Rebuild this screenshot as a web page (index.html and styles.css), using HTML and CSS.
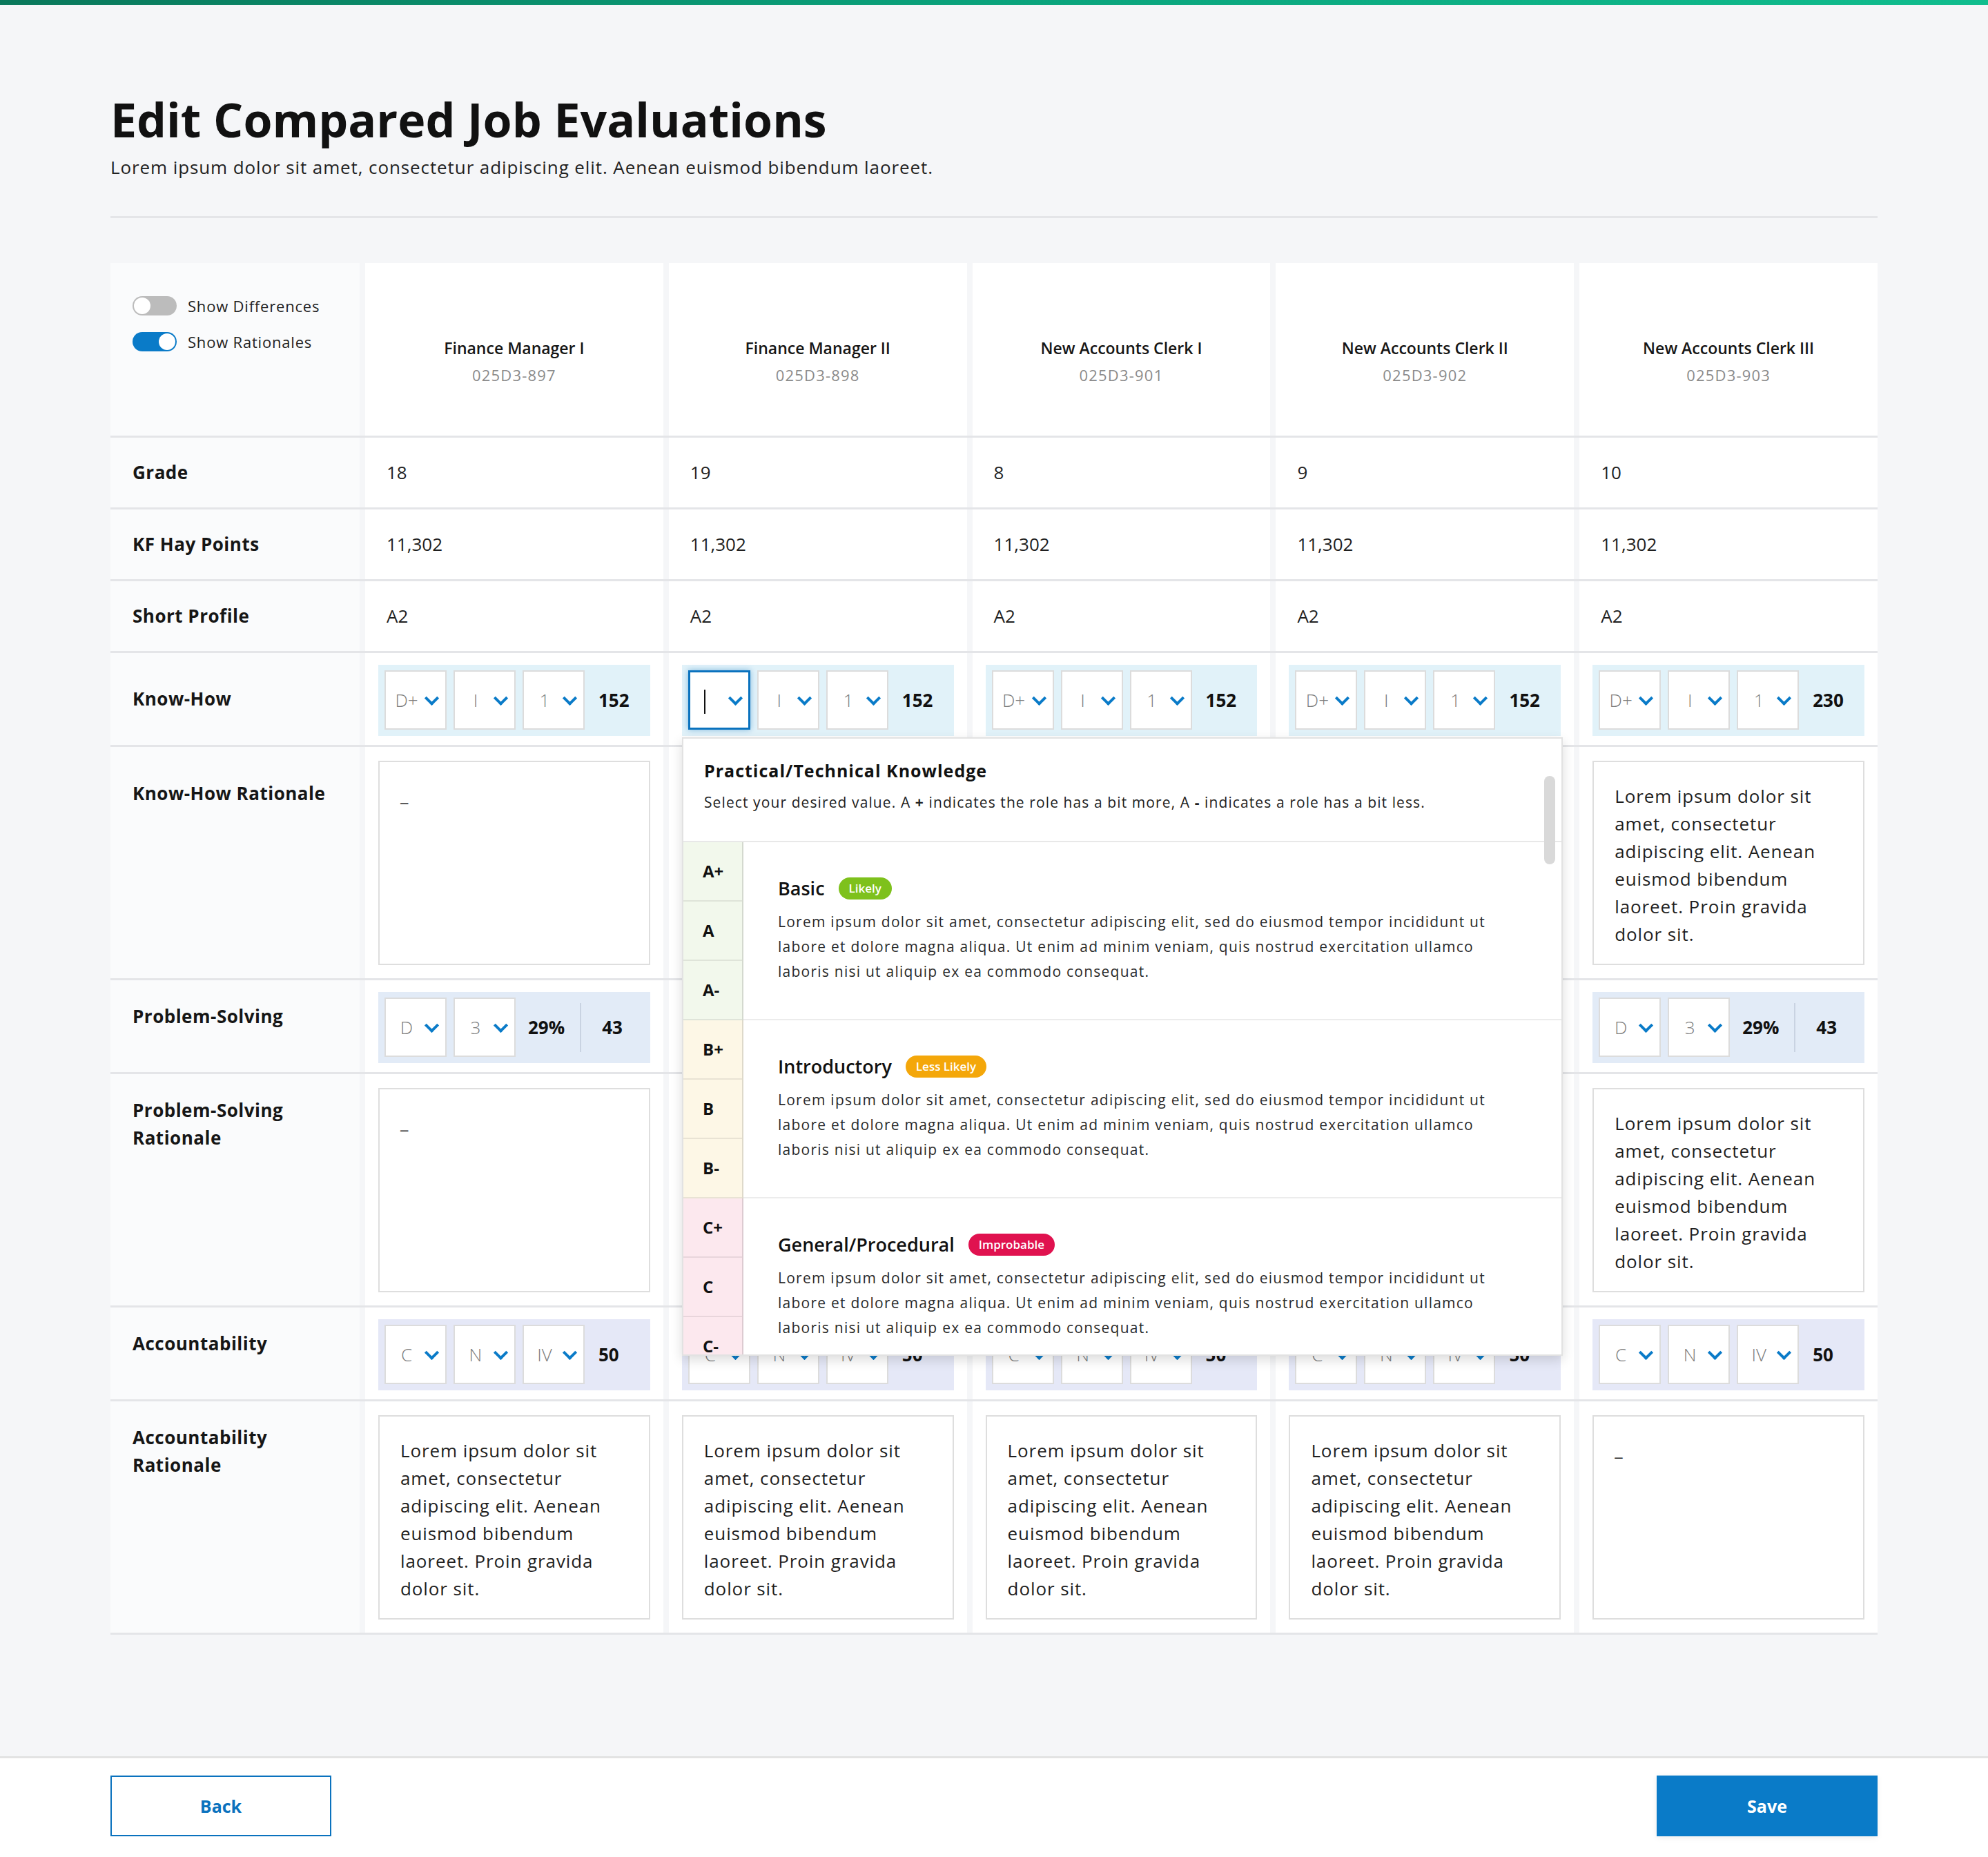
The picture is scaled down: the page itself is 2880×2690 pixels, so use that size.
FILE: index.html
```html
<!DOCTYPE html>
<html lang="en">
<head>
  <meta charset="UTF-8">
  <meta name="viewport" content="width=device-width, initial-scale=1.0">
  <title>Edit Compared Job Evaluations</title>
  <link rel="stylesheet" href="styles.css">
</head>
<body>
  <div class="topbar"></div>

  <main class="page">
    <h1 class="title">Edit Compared Job Evaluations</h1>
    <p class="subtitle">Lorem ipsum dolor sit amet, consectetur adipiscing elit. Aenean euismod bibendum laoreet.</p>
    <hr class="divider">

    <div class="compare">
      <!-- header -->
      <div class="row row-head">
        <div class="label toggles">
          <div class="toggle"><span class="switch"></span>Show Differences</div>
          <div class="toggle on"><span class="switch"></span>Show Rationales</div>
        </div>
        <div class="cell job"><div class="job-name">Finance Manager I</div><div class="job-id">025D3-897</div></div>
        <div class="cell job"><div class="job-name">Finance Manager II</div><div class="job-id">025D3-898</div></div>
        <div class="cell job"><div class="job-name">New Accounts Clerk I</div><div class="job-id">025D3-901</div></div>
        <div class="cell job"><div class="job-name">New Accounts Clerk II</div><div class="job-id">025D3-902</div></div>
        <div class="cell job"><div class="job-name">New Accounts Clerk III</div><div class="job-id">025D3-903</div></div>
      </div>

      <div class="row row-text">
        <div class="label">Grade</div>
        <div class="cell text">18</div>
        <div class="cell text">19</div>
        <div class="cell text">8</div>
        <div class="cell text">9</div>
        <div class="cell text">10</div>
      </div>

      <div class="row row-text">
        <div class="label">KF Hay Points</div>
        <div class="cell text">11,302</div>
        <div class="cell text">11,302</div>
        <div class="cell text">11,302</div>
        <div class="cell text">11,302</div>
        <div class="cell text">11,302</div>
      </div>

      <div class="row row-text">
        <div class="label">Short Profile</div>
        <div class="cell text">A2</div>
        <div class="cell text">A2</div>
        <div class="cell text">A2</div>
        <div class="cell text">A2</div>
        <div class="cell text">A2</div>
      </div>

      <!-- know-how -->
      <div class="row row-score">
        <div class="label">Know-How</div>
        <div class="cell"><div class="score know">
          <div class="pick"><span class="val">D+</span></div>
          <div class="pick"><span class="val">I</span></div>
          <div class="pick"><span class="val">1</span></div>
          <span class="total">152</span>
        </div></div>
        <div class="cell"><div class="score know">
          <div class="pick active"><span class="val"><span class="caret"></span></span></div>
          <div class="pick"><span class="val">I</span></div>
          <div class="pick"><span class="val">1</span></div>
          <span class="total">152</span>
        </div></div>
        <div class="cell"><div class="score know">
          <div class="pick"><span class="val">D+</span></div>
          <div class="pick"><span class="val">I</span></div>
          <div class="pick"><span class="val">1</span></div>
          <span class="total">152</span>
        </div></div>
        <div class="cell"><div class="score know">
          <div class="pick"><span class="val">D+</span></div>
          <div class="pick"><span class="val">I</span></div>
          <div class="pick"><span class="val">1</span></div>
          <span class="total">152</span>
        </div></div>
        <div class="cell"><div class="score know">
          <div class="pick"><span class="val">D+</span></div>
          <div class="pick"><span class="val">I</span></div>
          <div class="pick"><span class="val">1</span></div>
          <span class="total">230</span>
        </div></div>
      </div>

      <!-- columns 2-4 of the next three rows sit under the open dropdown -->
      <div class="row row-note">
        <div class="label label-kh">Know-How Rationale</div>
        <div class="cell"><div class="note"><span class="empty">_</span></div></div>
        <div class="cell"></div>
        <div class="cell"></div>
        <div class="cell"></div>
        <div class="cell"><div class="note">Lorem ipsum dolor sit amet, consectetur adipiscing elit. Aenean euismod bibendum laoreet. Proin gravida dolor sit.</div></div>
      </div>

      <div class="row row-score">
        <div class="label label-top">Problem-Solving</div>
        <div class="cell"><div class="score solve">
          <div class="pick"><span class="val">D</span></div>
          <div class="pick"><span class="val">3</span></div>
          <span class="pct">29%</span>
          <span class="total">43</span>
        </div></div>
        <div class="cell"></div>
        <div class="cell"></div>
        <div class="cell"></div>
        <div class="cell"><div class="score solve">
          <div class="pick"><span class="val">D</span></div>
          <div class="pick"><span class="val">3</span></div>
          <span class="pct">29%</span>
          <span class="total">43</span>
        </div></div>
      </div>

      <div class="row row-note">
        <div class="label label-top">Problem-Solving Rationale</div>
        <div class="cell"><div class="note"><span class="empty">_</span></div></div>
        <div class="cell"></div>
        <div class="cell"></div>
        <div class="cell"></div>
        <div class="cell"><div class="note">Lorem ipsum dolor sit amet, consectetur adipiscing elit. Aenean euismod bibendum laoreet. Proin gravida dolor sit.</div></div>
      </div>

      <!-- accountability -->
      <div class="row row-score">
        <div class="label label-top">Accountability</div>
        <div class="cell"><div class="score duty">
          <div class="pick"><span class="val">C</span></div>
          <div class="pick"><span class="val">N</span></div>
          <div class="pick"><span class="val">IV</span></div>
          <span class="total">50</span>
        </div></div>
        <div class="cell"><div class="score duty">
          <div class="pick"><span class="val">C</span></div>
          <div class="pick"><span class="val">N</span></div>
          <div class="pick"><span class="val">IV</span></div>
          <span class="total">50</span>
        </div></div>
        <div class="cell"><div class="score duty">
          <div class="pick"><span class="val">C</span></div>
          <div class="pick"><span class="val">N</span></div>
          <div class="pick"><span class="val">IV</span></div>
          <span class="total">50</span>
        </div></div>
        <div class="cell"><div class="score duty">
          <div class="pick"><span class="val">C</span></div>
          <div class="pick"><span class="val">N</span></div>
          <div class="pick"><span class="val">IV</span></div>
          <span class="total">50</span>
        </div></div>
        <div class="cell"><div class="score duty">
          <div class="pick"><span class="val">C</span></div>
          <div class="pick"><span class="val">N</span></div>
          <div class="pick"><span class="val">IV</span></div>
          <span class="total">50</span>
        </div></div>
      </div>

      <div class="row row-note">
        <div class="label label-top">Accountability Rationale</div>
        <div class="cell"><div class="note">Lorem ipsum dolor sit amet, consectetur adipiscing elit. Aenean euismod bibendum laoreet. Proin gravida dolor sit.</div></div>
        <div class="cell"><div class="note">Lorem ipsum dolor sit amet, consectetur adipiscing elit. Aenean euismod bibendum laoreet. Proin gravida dolor sit.</div></div>
        <div class="cell"><div class="note">Lorem ipsum dolor sit amet, consectetur adipiscing elit. Aenean euismod bibendum laoreet. Proin gravida dolor sit.</div></div>
        <div class="cell"><div class="note">Lorem ipsum dolor sit amet, consectetur adipiscing elit. Aenean euismod bibendum laoreet. Proin gravida dolor sit.</div></div>
        <div class="cell"><div class="note"><span class="empty">_</span></div></div>
      </div>

      <!-- dropdown opened from Finance Manager II / Know-How -->
      <div class="popover">
        <div class="pop-head">
          <div class="pop-title">Practical/Technical Knowledge</div>
          <div class="pop-desc">Select your desired value. A <b>+</b> indicates the role has a bit more, A <b>-</b> indicates a role has a bit less.</div>
        </div>
        <div class="option green">
          <div class="letters"><span>A+</span><span>A</span><span>A-</span></div>
          <div class="option-body">
            <div class="option-title">Basic <span class="badge">Likely</span></div>
            <p class="option-text">Lorem ipsum dolor sit amet, consectetur adipiscing elit, sed do eiusmod tempor incididunt ut labore et dolore magna aliqua. Ut enim ad minim veniam, quis nostrud exercitation ullamco laboris nisi ut aliquip ex ea commodo consequat.</p>
          </div>
        </div>
        <div class="option yellow">
          <div class="letters"><span>B+</span><span>B</span><span>B-</span></div>
          <div class="option-body">
            <div class="option-title">Introductory <span class="badge">Less Likely</span></div>
            <p class="option-text">Lorem ipsum dolor sit amet, consectetur adipiscing elit, sed do eiusmod tempor incididunt ut labore et dolore magna aliqua. Ut enim ad minim veniam, quis nostrud exercitation ullamco laboris nisi ut aliquip ex ea commodo consequat.</p>
          </div>
        </div>
        <div class="option pink">
          <div class="letters"><span>C+</span><span>C</span><span>C-</span></div>
          <div class="option-body">
            <div class="option-title">General/Procedural <span class="badge">Improbable</span></div>
            <p class="option-text">Lorem ipsum dolor sit amet, consectetur adipiscing elit, sed do eiusmod tempor incididunt ut labore et dolore magna aliqua. Ut enim ad minim veniam, quis nostrud exercitation ullamco laboris nisi ut aliquip ex ea commodo consequat.</p>
          </div>
        </div>
        <div class="scroll-thumb"></div>
      </div>
    </div>
  </main>

  <footer class="footer">
    <button class="btn btn-back">Back</button>
    <button class="btn btn-save">Save</button>
  </footer>
</body>
</html>
```

FILE: styles.css
```css
* {
  box-sizing: border-box;
}
body {
  margin: 0;
  min-height: 100vh;
  display: flex;
  flex-direction: column;
  background-color: #f5f6f8;
  font-family: "Open Sans", "Noto Sans", sans-serif;
  color: #1d1d1d;
}
.topbar {
  height: 7px;
  background: linear-gradient(90deg, #0a785b, #0aa37c 50%, #10bd8e);
}
.page {
  flex: 1;
  padding: 125px 160px 0;
}
.title {
  margin: 0;
  font-size: 68px;
  line-height: 1.2;
  font-weight: 700;
  color: #111;
}
.subtitle {
  margin: 13px 0 0;
  font-size: 26px;
  line-height: 1.2;
  letter-spacing: 0.9px;
  color: #222;
}
.divider {
  margin: 55px 0 0;
  border: 0;
  height: 3px;
  background: #e4e5e8;
}

/* comparison table */
.compare {
  position: relative;
  margin-top: 65px;
}
.row {
  display: grid;
  grid-template-columns: 361px repeat(5, 1fr);
  column-gap: 8px;
  border-bottom: 3px solid #e4e5e8;
}
.row-head {
  height: 253px;
}
.row-text {
  height: 104px;
}
.row-score {
  height: 136px;
}
.row-note {
  height: 338px;
}
.cell {
  background-color: #fff;
}
.label {
  background-color: #fafbfc;
  padding: 0 30px 0 32px;
  display: flex;
  align-items: center;
  font-size: 26px;
  line-height: 40px;
  letter-spacing: 0.5px;
  font-weight: 700;
  color: #161616;
}
.label-top {
  align-items: flex-start;
  padding-top: 32px;
}
.label-kh {
  align-items: flex-start;
  padding-top: 47px;
}

/* header */
.toggles {
  flex-direction: column;
  align-items: flex-start;
  padding-top: 48px;
  gap: 24px;
  font-size: 22px;
  font-weight: 400;
  line-height: 28px;
  letter-spacing: 0.8px;
  color: #222;
}
.toggle {
  display: flex;
  align-items: center;
  gap: 16px;
}
.switch {
  position: relative;
  width: 64px;
  height: 28px;
  border-radius: 14px;
  background-color: #bcbcbc;
}
.switch::after {
  content: "";
  position: absolute;
  top: 2px;
  left: 2px;
  width: 24px;
  height: 24px;
  border-radius: 50%;
  background-color: #fff;
}
.toggle.on .switch {
  background-color: #0a7bc8;
}
.toggle.on .switch::after {
  left: 38px;
}
.job {
  text-align: center;
  padding-top: 107px;
}
.job-name {
  font-size: 23px;
  line-height: 32px;
  font-weight: 600;
  color: #161616;
}
.job-id {
  margin-top: 7px;
  font-size: 22px;
  line-height: 32px;
  letter-spacing: 1.2px;
  color: #8b8b8b;
}
.text {
  display: flex;
  align-items: center;
  padding-left: 31px;
  font-size: 26px;
  color: #1f1f1f;
}

/* score pickers */
.row-score .cell {
  padding: 17px 19px 0;
}
.score {
  display: flex;
  align-items: center;
  height: 103px;
  padding: 0 9px;
  gap: 10px;
}
.know {
  background-color: #e1f2f9;
}
.solve {
  background-color: #e2ebf7;
}
.duty {
  background-color: #e5e8f7;
}
.pick {
  display: flex;
  align-items: center;
  width: 90px;
  height: 86px;
  background-color: #fff;
  border: 2px solid #dcdcdc;
  padding-left: 6px;
}
.pick::after {
  content: "";
  width: 11px;
  height: 11px;
  margin: -6px 0 0 5px;
  border: solid #0a7bc8;
  border-width: 0 4px 4px 0;
  transform: rotate(45deg);
}
.val {
  width: 48px;
  text-align: center;
  font-size: 26px;
  font-weight: 300;
  color: #7d7d7d;
}
.pick.active {
  border: 3px solid #0a72be;
  box-shadow: 0 0 8px rgba(10, 114, 190, 0.45);
  padding-left: 5px;
}
.pick.active .val {
  text-align: left;
  padding-left: 15px;
}
.caret {
  display: inline-block;
  width: 2px;
  height: 35px;
  vertical-align: middle;
  background-color: #111;
}
.total,
.pct {
  font-size: 26px;
  font-weight: 700;
  color: #111;
}
.know .total,
.duty .total {
  margin-left: 10px;
}
.pct {
  margin-left: 8px;
  padding-right: 22px;
  border-right: 2px solid #c9d3e2;
  line-height: 71px;
}
.solve .total {
  margin-left: 20px;
}

/* rationale boxes */
.row-note .cell {
  padding: 20px 19px 0;
}
.note {
  height: 296px;
  border: 2px solid #dedede;
  background-color: #fff;
  padding: 29px 30px;
  font-size: 26px;
  line-height: 40px;
  letter-spacing: 0.9px;
  color: #1f1f1f;
}
.empty {
  position: relative;
  top: -2px;
}

/* dropdown */
.popover {
  position: absolute;
  left: 828px;
  top: 687px;
  width: 1276px;
  height: 896px;
  overflow: hidden;
  background-color: #fff;
  border: 2px solid #e2e2e2;
  box-shadow: 0 6px 16px rgba(0, 0, 0, 0.14);
}
.pop-head {
  height: 150px;
  padding: 29px 30px 0;
  border-bottom: 2px solid #e8e8e8;
}
.pop-title {
  font-size: 25px;
  line-height: 34px;
  letter-spacing: 1px;
  font-weight: 700;
  color: #111;
}
.pop-desc {
  margin-top: 14px;
  font-size: 21px;
  line-height: 30px;
  letter-spacing: 1.1px;
  color: #222;
}
.option {
  display: flex;
}
.letters {
  width: 87px;
  flex-shrink: 0;
  border-right: 2px solid rgba(0, 0, 0, 0.12);
}
.letters span {
  display: flex;
  align-items: center;
  height: 86px;
  padding: 0 0 0 28px;
  border-bottom: 2px solid rgba(0, 0, 0, 0.08);
  font-size: 24px;
  font-weight: 700;
  color: #111;
}
.green .letters {
  background-color: #f2f8ec;
}
.yellow .letters {
  background-color: #fdf7e6;
}
.pink .letters {
  background-color: #fce8ee;
}
.option-body {
  flex: 1;
  display: flex;
  flex-direction: column;
  justify-content: center;
  padding: 0 40px 0 50px;
  border-bottom: 2px solid #ececec;
}
.option-title {
  display: flex;
  align-items: center;
  gap: 20px;
  font-size: 27px;
  line-height: 34px;
  font-weight: 600;
  color: #111;
}
.badge {
  height: 32px;
  padding: 0 15px;
  border-radius: 16px;
  font-size: 17px;
  line-height: 32px;
  font-weight: 600;
  color: #fff;
}
.green .badge {
  background-color: #7ec11c;
}
.yellow .badge {
  background-color: #f4a70a;
}
.pink .badge {
  background-color: #e0124f;
}
.option-text {
  max-width: 1045px;
  margin: 13px 0 0;
  font-size: 21px;
  line-height: 36px;
  letter-spacing: 1.25px;
  color: #2a2a2a;
}
.scroll-thumb {
  position: absolute;
  top: 54px;
  right: 9px;
  width: 16px;
  height: 128px;
  border-radius: 8px;
  background-color: #d9d9d9;
}

/* footer */
.footer {
  display: flex;
  justify-content: space-between;
  padding: 25px 160px 30px;
  background-color: #fff;
  border-top: 3px solid #e3e3e3;
}
.btn {
  width: 320px;
  height: 88px;
  font-family: "Open Sans", "Noto Sans", sans-serif;
  font-size: 25px;
  font-weight: 700;
  cursor: pointer;
}
.btn-back {
  background-color: #fff;
  border: 2px solid #0a72be;
  color: #0a72be;
}
.btn-save {
  background-color: #0a7bc8;
  border: 0;
  color: #fff;
  box-shadow: 0 2px 8px rgba(0, 0, 0, 0.08);
}
```
